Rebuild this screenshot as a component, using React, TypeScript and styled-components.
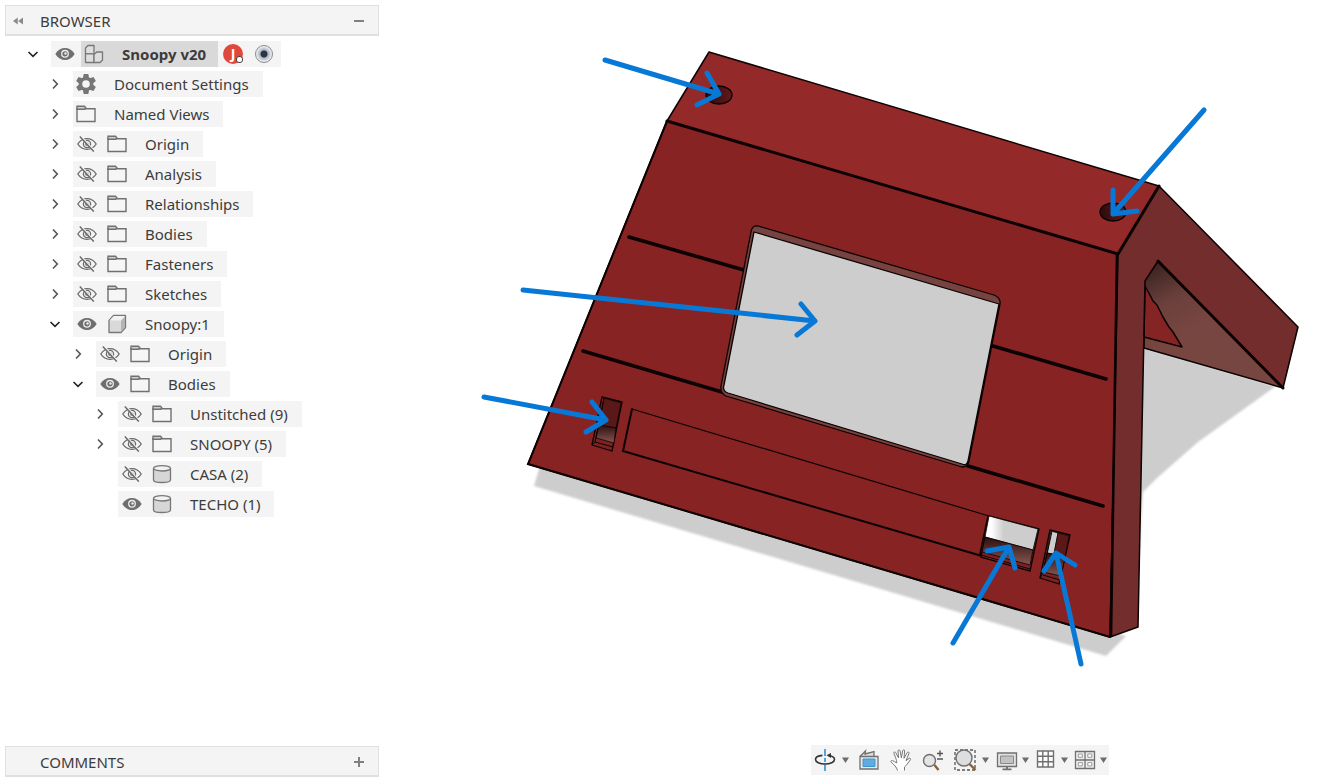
import React from "react";
import styled, { createGlobalStyle } from "styled-components";

const GlobalStyle = createGlobalStyle`
  * { box-sizing: border-box; }
  body {
    margin: 0;
    background: #fff;
    color: #3c3c3c;
    font-family: "Noto Sans", "Open Sans", sans-serif;
    font-size: 15px;
    line-height: 24px;
  }
  button {
    border: 0;
    padding: 0;
    background: none;
    color: inherit;
    font: inherit;
    cursor: pointer;
  }
  svg { display: block; flex: none; }
`;

const Page = styled.div`
  display: grid;
  grid-template-columns: 379px 1fr;
  min-height: 100vh;
`;

const Sidebar = styled.aside`
  display: flex;
  flex-direction: column;
  justify-content: space-between;
  padding: 5px 0 5px 5px;
`;

const PanelHeader = styled.header`
  display: flex;
  align-items: center;
  height: 31px;
  padding-right: 11px;
  background: #f4f4f4;
  border: 1px solid #e0e0e0;
  box-shadow: inset 0 -1px #e0e0e0;
`;

const PanelIconButton = styled.button`
  display: grid;
  place-items: center;
  width: 16px;
  height: 16px;
`;

const CollapseSlot = styled.div`
  width: 34px;
  padding-left: 4px;
`;

const PanelTitle = styled.h2`
  flex: 1;
  margin: 0;
  font-size: 15px;
  font-weight: 400;
`;

const Tree = styled.ul`
  margin: 0;
  padding: 3px 0 0;
  list-style: none;
`;

const indents = [16, 38, 61, 83];

const Row = styled.li<{ $level: number }>`
  display: flex;
  align-items: center;
  height: 30px;
  padding-left: ${(p) => indents[p.$level]}px;
`;

const Toggle = styled.button`
  display: grid;
  place-items: center;
  width: 24px;
  height: 24px;
  margin-right: 6px;
`;

const ToggleSpace = styled.span`
  width: 30px;
`;

const Chip = styled.div`
  display: flex;
  align-items: center;
  height: 26px;
  background: #f4f4f4;
`;

const IconButton = styled.button`
  display: grid;
  place-items: center;
  width: 27px;
  height: 26px;
`;

const Item = styled.button<{ $active?: boolean }>`
  display: flex;
  align-items: center;
  height: 26px;
  margin-left: ${(p) => (p.$active ? 3 : 0)}px;
  padding-right: ${(p) => (p.$active ? 12 : 14)}px;
  background: ${(p) => (p.$active ? "#d9d9d9" : "none")};
  font-weight: ${(p) => (p.$active ? 700 : 400)};
  white-space: nowrap;
`;

const ItemIcon = styled.span<{ $lead?: boolean }>`
  display: grid;
  place-items: center;
  width: ${(p) => (p.$lead ? 26 : 34)}px;
  margin-right: ${(p) => (p.$lead ? 15 : 11)}px;
`;

const AvatarBadge = styled.button`
  position: relative;
  width: 20px;
  height: 20px;
  margin: 0 4px 0 5px;
  border-radius: 50%;
  background: #e0483e;
  color: #fff;
  font-size: 14px;
  font-weight: 700;
  line-height: 20px;
`;

const StatusDot = styled.span`
  position: absolute;
  right: 0;
  bottom: 1px;
  width: 7px;
  height: 7px;
  border: 1px solid #444;
  border-radius: 3px;
  background: #fff;
`;

const ActiveRadio = styled.input`
  appearance: none;
  width: 18px;
  height: 18px;
  margin: 0 8px;
  border: 1px solid #8a8a8a;
  border-radius: 50%;
  background: radial-gradient(circle, #2d3440 0 3px, #a9b4c6 4px, #dfe3ea 7px, #f4f4f4 8px);
`;

const Viewport = styled.main`
  display: flex;
  flex-direction: column;
  min-width: 0;
`;

const Canvas = styled.div`
  flex: 1;
  min-height: 0;
  svg { width: 100%; height: auto; }
`;

const Toolbar = styled.nav`
  display: flex;
  align-self: flex-end;
  gap: 4px;
  height: 30px;
  margin: 0 213px 7px 0;
  background: #f4f4f4;
`;

const ToolGroup = styled.div<{ $gap: number }>`
  display: flex;
  gap: ${(p) => p.$gap}px;
`;

const Split = styled.div`
  display: flex;
`;

const Tool = styled.button<{ $compact?: boolean }>`
  display: grid;
  place-items: center;
  width: ${(p) => (p.$compact ? 24 : 28)}px;
  height: 30px;
`;

const Caret = styled.button`
  display: grid;
  place-items: center;
  width: 12px;
  height: 30px;
`;

/* ---------- tree icons ---------- */

const Chevron = ({ open }: { open: boolean }) => (
  <svg width="12" height="12" viewBox="0 0 12 12" fill="none" stroke={open ? "#222" : "#555"} strokeWidth="1.6">
    {open ? <path d="M1.5 4 6 8.3 10.5 4" /> : <path d="M4 1.5 8.3 6 4 10.5" />}
  </svg>
);

const EyeOpen = () => (
  <svg width="20" height="14" viewBox="0 0 20 14">
    <path d="M.3 7C3 2.800 6.200 1 10 1s7 1.800 9.700 6c-2.700 4.200-5.900 6-9.700 6S3 11.200.3 7z" fill="#6e6e6e" />
    <circle cx="10" cy="6.800" r="3.300" fill="#6e6e6e" stroke="#eee" strokeWidth="1.300" />
    <circle cx="10.500" cy="6.500" r="1.200" fill="#eee" />
  </svg>
);

const EyeOff = () => (
  <svg width="20" height="16" viewBox="0 0 20 16" fill="none" stroke="#6a6a6a" strokeWidth="1.300">
    <path d="M.8 8C3.200 4.300 6.300 2.600 10 2.600S16.800 4.300 19.200 8c-2.400 3.700-5.500 5.400-9.200 5.400S3.200 11.700.8 8z" />
    <circle cx="10" cy="8" r="3.600" />
    <circle cx="10" cy="8" r="1.200" />
    <path d="M4 .6 17.800 15.600" stroke="#f4f4f4" strokeWidth="2" />
    <path d="M2.800.6 16.800 15.600" strokeWidth="1.400" />
  </svg>
);

const Folder = () => (
  <svg width="20" height="18" viewBox="0 0 20 18" fill="none" stroke="#707070" strokeWidth="1.400">
    <path d="M1 3.800h18v12.700H1z" fill="#f6f6f6" />
    <path d="M1 4.200V1.200h7.500l1.300 1.500L8.600 4.200z" fill="#cfcfcf" />
  </svg>
);

const Gear = () => (
  <svg width="20" height="20" viewBox="0 0 20 20">
    <g fill="#767676">
      {[0, 60, 120].map((a) => (
        <path key={a} d="M7.700 0h4.600l.8 4v12l-.8 4H7.700l-.8-4V4z" transform={`rotate(${a} 10 10)`} />
      ))}
      <circle cx="10" cy="10" r="7.200" />
    </g>
    <circle cx="10" cy="10" r="3.800" fill="#f4f4f4" />
  </svg>
);

const Assembly = () => (
  <svg width="20" height="20" viewBox="0 0 20 20" fill="#dedede" stroke="#777" strokeWidth="1.300" strokeLinejoin="round">
    <path d="M1.500 4 4 1.500h6v8.300H1.500z" />
    <path d="M1.500 9.800h8.500v8.700H1.500z" />
    <path d="M10 9.800h.8L12.800 8h5.700v8l-2.500 2.500h-6z" />
  </svg>
);

const Component = () => (
  <svg width="20" height="20" viewBox="0 0 20 20" stroke="#777" strokeWidth="1.300" strokeLinejoin="round">
    <path d="M2 6.500 6.500 1.500H18.500V13.500L14 18.500H2z" fill="#d9d9d9" />
    <path d="M2.600 6.500 6.700 2.100H18L14 6.500z" fill="#f2f2f2" stroke="none" />
    <path d="M14 6.800 18 2.400V13.300L14 17.900z" fill="#b5b5b5" stroke="none" />
  </svg>
);

const Body = () => (
  <svg width="20" height="20" viewBox="0 0 20 20" stroke="#777" strokeWidth="1.300">
    <path d="M1.500 4.300v11.600c0 1.500 3.800 2.600 8.500 2.600s8.500-1.100 8.500-2.600V4.300" fill="#d6d6d6" />
    <ellipse cx="10" cy="4.300" rx="8.500" ry="2.700" fill="#f2f2f2" />
  </svg>
);

/* ---------- navigation bar icons ---------- */

const CaretIcon = () => (
  <svg width="7" height="6" viewBox="0 0 7 6"><path d="M0 .5h7L3.500 6z" fill="#6c6c6c" /></svg>
);

const Orbit = () => (
  <svg width="22" height="22" viewBox="0 0 22 22" fill="none">
    <path d="M11 0v7M11 9v4M11 15.500V22" stroke="#3f9fdc" strokeWidth="1.800" />
    <path d="M8.500 6.400C4.500 6.700 1.500 8.300 1.500 10.500c0 2.500 4.300 4.500 9.500 4.500s9.500-2 9.500-4.500c0-2-2.300-3.500-5.500-4" stroke="#333" strokeWidth="1.600" />
    <path d="M12.500 6.300 17 4v5z" fill="#333" />
  </svg>
);

const LookAt = () => (
  <svg width="22" height="22" viewBox="0 0 22 22" fill="none" stroke="#707070" strokeWidth="1.300">
    <path d="M2 7.500 7.500 2 7 5l9-2.500v5" fill="#ddd" />
    <path d="M2 7.500h18v12.500H2z" fill="#e9e9e9" />
    <path d="M5 10h12v7.500H5z" fill="#5cace2" stroke="#3f95d0" strokeWidth="1" />
  </svg>
);

const Hand = () => (
  <svg width="24" height="24" viewBox="0 0 24 24" fill="#fff" stroke="#777" strokeWidth="1" strokeLinejoin="round">
    <path d="M8.500 22.500C7.700 19 5 16.800 2.200 14.200c-.8-.8.1-2.100 1.400-1.600 1.600.6 2.700 1.600 4 2.400.4-1.300-.2-3.200-.9-5.200L4.900 5.200c-.4-1.200 1.200-1.800 1.800-.6L9.600 10 9 3c-.1-1.300 1.700-1.500 2-.2l1.400 7 1.300-7.200c.3-1.200 2-1 1.900.3L15 10.300l3.300-5.800c.7-1.100 2.200-.3 1.700.9l-3 7.300 3-2.300c1-.7 2 .4 1.300 1.400-2.500 3.400-3.600 5.400-5.800 7.200v3.500" />
  </svg>
);

const Zoom = () => (
  <svg width="24" height="24" viewBox="0 0 24 24" fill="none">
    <path d="m13.500 17 4 5" stroke="#8a6034" strokeWidth="2.400" />
    <circle cx="8.500" cy="12.500" r="6" fill="#e4e4e4" stroke="#707070" strokeWidth="1.400" />
    <path d="M16 5.500h6M19 2.500v6M16 11h6" stroke="#555" strokeWidth="1.400" />
  </svg>
);

const ZoomWindow = () => (
  <svg width="24" height="24" viewBox="0 0 24 24" fill="none">
    <path d="M2 2h20v20H2z" stroke="#555" strokeWidth="1.300" strokeDasharray="3 2" />
    <path d="m16.500 16 6 6" stroke="#8a6034" strokeWidth="2.400" />
    <circle cx="11" cy="10" r="8" fill="#dedede" stroke="#707070" strokeWidth="1.400" />
  </svg>
);

const Display = () => (
  <svg width="22" height="22" viewBox="0 0 22 22" fill="none" stroke="#707070" strokeWidth="1.300">
    <path d="M1.500 4h19v13.500h-19z" fill="#e2e2e2" />
    <path d="M4.500 7h13v7.500h-13z" fill="#c2c2c2" stroke="#8a8a8a" strokeWidth="1" />
    <path d="M11 17.500V20M6.500 20.300h9" strokeWidth="1.800" />
  </svg>
);

const Grid = () => (
  <svg width="20" height="20" viewBox="0 0 20 20" fill="#fcfcfc" stroke="#707070" strokeWidth="1.400">
    <path d="M1.500 1H17.500V17H1.500zM6.800 1V17M12.200 1V17M1.500 6.300h16M1.500 11.700h16" />
  </svg>
);

const Viewports = () => (
  <svg width="22" height="20" viewBox="0 0 22 20" fill="#eee" stroke="#707070" strokeWidth="1.300">
    <path d="M1.500 1.500h19v17h-19zM11 1.500v17M1.500 10h19" />
    <path d="M4.300 4h4v3.300h-4zM13.800 4h4v3.300h-4zM4.300 12.600h4v3.300h-4zM13.800 12.600h4v3.300h-4z" stroke="#999" strokeWidth="1" fill="#fff" />
  </svg>
);

/* ---------- 3D model ---------- */

const arrows = [
  "M605 60 719 94M707 73 719 94 697 105",
  "M1204 110 1113 214M1113 190 1113 214 1137 211",
  "M523 290 815 321M801 304 815 321 797 335",
  "M484 397 606 420M592 402 606 420 586 432",
  "M953 643 1009 547M987 551 1009 547 1015 568",
  "M1081 664 1056 553M1075 565 1056 553 1044 571",
];

const Model = () => (
  <svg viewBox="379 0 943 745" role="img" aria-label="Red roof part with annotation arrows">
    <defs>
      <linearGradient id="inner" gradientUnits="userSpaceOnUse" x1="1150" y1="268" x2="1185" y2="335">
        <stop offset="0" stopColor="#3c2422" />
        <stop offset=".5" stopColor="#6b403c" />
        <stop offset="1" stopColor="#784641" />
      </linearGradient>
      <linearGradient id="pocket" x1="0" y1="0" x2="0" y2="1">
        <stop offset="0" stopColor="#2a1010" />
        <stop offset="1" stopColor="#875650" />
      </linearGradient>
      <linearGradient id="port" x1="0" y1="0" x2="1" y2="0">
        <stop offset="0" stopColor="#fff" />
        <stop offset=".12" stopColor="#fff" />
        <stop offset=".35" stopColor="#cdcdcd" />
      </linearGradient>
      <linearGradient id="hole" x1="0" y1="0" x2="1" y2="0">
        <stop offset="0" stopColor="#2c0a0a" />
        <stop offset="1" stopColor="#631a1a" />
      </linearGradient>
      <linearGradient id="sideShade" gradientUnits="userSpaceOnUse" x1="0" y1="490" x2="0" y2="560">
        <stop offset="0" stopColor="#cdcdcd" />
        <stop offset="1" stopColor="#cdcdcd" stopOpacity="0" />
      </linearGradient>
      <filter id="soft"><feGaussianBlur stdDeviation="1" /></filter>
    </defs>

    <g fill="#cdcdcd" filter="url(#soft)">
      <path d="M540 466 534 486 1106 656 1126 636z" />
      <path d="M1138 346 1276 386 1198 442 1157 478 1138 497z" />
      <path d="M1138 490H1143L1140 560H1138z" fill="url(#sideShade)" />
    </g>

    <g stroke="#0c0202" strokeWidth="1.500" strokeLinejoin="round">
      <path d="M1158 261 1144 281V348L1283 388z" fill="url(#inner)" />
      <path d="M1145 286 1151 297 1153 301 1157 305 1163 317 1169 327 1173 332 1182 347 1144 337z" fill="#842424" />
      <path d="M709 52 1159 186 1118 254 667 121z" fill="#932929" />
      <path d="M667 121 1118 254 1110 637 528 464z" fill="#872323" />
      <path d="M1118 254 1159 186 1298 327 1283 388 1158 261 1145 281 1138 627 1110 637z" fill="#742d2d" />
    </g>

    <g stroke="#0c0202" fill="none" strokeLinecap="round">
      <path d="M667 121 1118 254 1159 186M1158 261 1283 388" strokeWidth="3" />
      <path d="M1117 255 1111 636" strokeWidth="2.600" />
      <path d="M667 121 528 464 1110 637" strokeWidth="2" />
      <path d="M629 237 744 270M993 346 1106 379M583 351 722 392M968 466 1103 506" strokeWidth="3.600" />
      <path d="M989 516 632 409" strokeWidth="1.200" />
      <path d="M632 409 623 451 982 556" strokeWidth="2" />
      <path d="M988 516 980 554" strokeWidth="1.500" />
    </g>

    <g stroke="#0c0202" strokeWidth="1.300" strokeLinejoin="round">
      <path d="M751 232Q752 225 758 226L994 295Q1001 298 1000 304L969 461Q968 467 962 467L726 396Q720 393 721 386z" fill="#764340" />
      <path d="M754 232 999 304 968 461Q967 466 962 464L728 393Q722 391 724 385z" fill="#cdcdcd" />

      <path d="M989 516 1039 529 1030 571 981 557z" fill="#7c2222" />
      <path d="M989 516 1038 529 1033 550 985 537z" fill="url(#port)" strokeWidth=".8" />
      <path d="M985 537 1033 550 1030 565 982 552z" fill="url(#pocket)" strokeWidth=".8" />
      <path d="M981 555 1030 569" strokeWidth="1" />

      <path d="M1050 530 1070 535 1059 584 1040 578z" fill="#7c2222" />
      <path d="M1051 531 1058 533 1054 554 1047 553z" fill="#cdcdcd" strokeWidth=".8" />
      <path d="M1058 533 1069 536 1065 557 1054 554z" fill="#5b1818" strokeWidth=".6" />
      <path d="M1047 553 1065 557 1061 576 1043 572z" fill="url(#pocket)" strokeWidth=".8" />
      <path d="M1052 531 1043 573 1040 578M1043 575 1060 580" fill="none" strokeWidth="1" />

      <path d="M602 397 622 402 612 451 592 445z" fill="#7c2222" />
      <path d="M604 398 621 403 616 428 599 425z" fill="#5b1818" strokeWidth=".8" />
      <path d="M599 425 616 428 614 443 596 438z" fill="url(#pocket)" strokeWidth=".8" />
      <path d="M604 398 595 442 592 445M595 442 613 447" fill="none" strokeWidth="1" />

      <ellipse cx="719" cy="95" rx="13" ry="9" fill="url(#hole)" />
      <ellipse cx="1113" cy="212" rx="13" ry="9" fill="url(#hole)" />
    </g>

    <g stroke="#0878d7" strokeWidth="5" strokeLinecap="round" strokeLinejoin="round" fill="none">
      {arrows.map((d) => <path key={d} d={d} />)}
    </g>
  </svg>
);

/* ---------- data ---------- */

type Node = {
  label: string;
  level: number;
  open?: boolean;
  visible?: boolean;
  icon: () => React.JSX.Element;
};

const nodes: Node[] = [
  { label: "Document Settings", level: 1, open: false, icon: Gear },
  { label: "Named Views", level: 1, open: false, icon: Folder },
  { label: "Origin", level: 1, open: false, visible: false, icon: Folder },
  { label: "Analysis", level: 1, open: false, visible: false, icon: Folder },
  { label: "Relationships", level: 1, open: false, visible: false, icon: Folder },
  { label: "Bodies", level: 1, open: false, visible: false, icon: Folder },
  { label: "Fasteners", level: 1, open: false, visible: false, icon: Folder },
  { label: "Sketches", level: 1, open: false, visible: false, icon: Folder },
  { label: "Snoopy:1", level: 1, open: true, visible: true, icon: Component },
  { label: "Origin", level: 2, open: false, visible: false, icon: Folder },
  { label: "Bodies", level: 2, open: true, visible: true, icon: Folder },
  { label: "Unstitched (9)", level: 3, open: false, visible: false, icon: Folder },
  { label: "SNOOPY (5)", level: 3, open: false, visible: false, icon: Folder },
  { label: "CASA (2)", level: 3, visible: false, icon: Body },
  { label: "TECHO (1)", level: 3, visible: true, icon: Body },
];

const TreeRow = ({ node }: { node: Node }) => {
  const Icon = node.icon;
  const hasEye = node.visible !== undefined;
  return (
    <Row $level={node.level}>
      {node.open === undefined ? (
        <ToggleSpace />
      ) : (
        <Toggle aria-label={`Toggle ${node.label}`} aria-expanded={node.open}>
          <Chevron open={node.open} />
        </Toggle>
      )}
      <Chip>
        {hasEye && (
          <IconButton aria-label={`Visibility of ${node.label}`}>
            {node.visible ? <EyeOpen /> : <EyeOff />}
          </IconButton>
        )}
        <Item>
          <ItemIcon $lead={!hasEye}><Icon /></ItemIcon>
          {node.label}
        </Item>
      </Chip>
    </Row>
  );
};

const SplitTool = ({ name, compact, children }: { name: string; compact?: boolean; children: React.ReactNode }) => (
  <Split>
    <Tool aria-label={name} $compact={compact}>{children}</Tool>
    <Caret aria-label={`${name} options`}><CaretIcon /></Caret>
  </Split>
);

export default function App() {
  return (
    <>
      <GlobalStyle />
      <Page>
        <Sidebar>
          <section>
            <PanelHeader>
              <CollapseSlot>
                <PanelIconButton aria-label="Collapse browser">
                  <svg width="10" height="8" viewBox="0 0 10 8" fill="#8a8a8a"><path d="M4.800.5v7L0 4zM10 .5v7L5.200 4z" /></svg>
                </PanelIconButton>
              </CollapseSlot>
              <PanelTitle>BROWSER</PanelTitle>
              <PanelIconButton aria-label="Minimize browser">
                <svg width="12" height="12" viewBox="0 0 12 12"><path d="M1 6h10" stroke="#808080" strokeWidth="2" /></svg>
              </PanelIconButton>
            </PanelHeader>
            <Tree>
              <Row $level={0}>
                <Toggle aria-label="Toggle Snoopy v20" aria-expanded>
                  <Chevron open />
                </Toggle>
                <Chip>
                  <IconButton aria-label="Visibility of Snoopy v20"><EyeOpen /></IconButton>
                  <Item $active>
                    <ItemIcon $lead><Assembly /></ItemIcon>
                    Snoopy v20
                  </Item>
                  <AvatarBadge aria-label="User J">J<StatusDot /></AvatarBadge>
                  <ActiveRadio type="radio" name="active" aria-label="Activate Snoopy v20" defaultChecked />
                </Chip>
              </Row>
              {nodes.map((node) => (
                <TreeRow key={`${node.level}-${node.label}`} node={node} />
              ))}
            </Tree>
          </section>
          <PanelHeader>
            <CollapseSlot />
            <PanelTitle>COMMENTS</PanelTitle>
            <PanelIconButton aria-label="Expand comments">
              <svg width="12" height="12" viewBox="0 0 12 12"><path d="M1 6h10M6 1v10" stroke="#808080" strokeWidth="2" /></svg>
            </PanelIconButton>
          </PanelHeader>
        </Sidebar>
        <Viewport>
          <Canvas><Model /></Canvas>
          <Toolbar aria-label="Navigation">
            <ToolGroup $gap={4}>
              <SplitTool name="Orbit"><Orbit /></SplitTool>
              <Tool aria-label="Look at"><LookAt /></Tool>
              <Tool aria-label="Pan"><Hand /></Tool>
              <Tool aria-label="Zoom"><Zoom /></Tool>
              <SplitTool name="Zoom window"><ZoomWindow /></SplitTool>
            </ToolGroup>
            <ToolGroup $gap={3}>
              <SplitTool name="Display settings" compact><Display /></SplitTool>
              <SplitTool name="Grid and snaps" compact><Grid /></SplitTool>
              <SplitTool name="Viewports" compact><Viewports /></SplitTool>
            </ToolGroup>
          </Toolbar>
        </Viewport>
      </Page>
    </>
  );
}
